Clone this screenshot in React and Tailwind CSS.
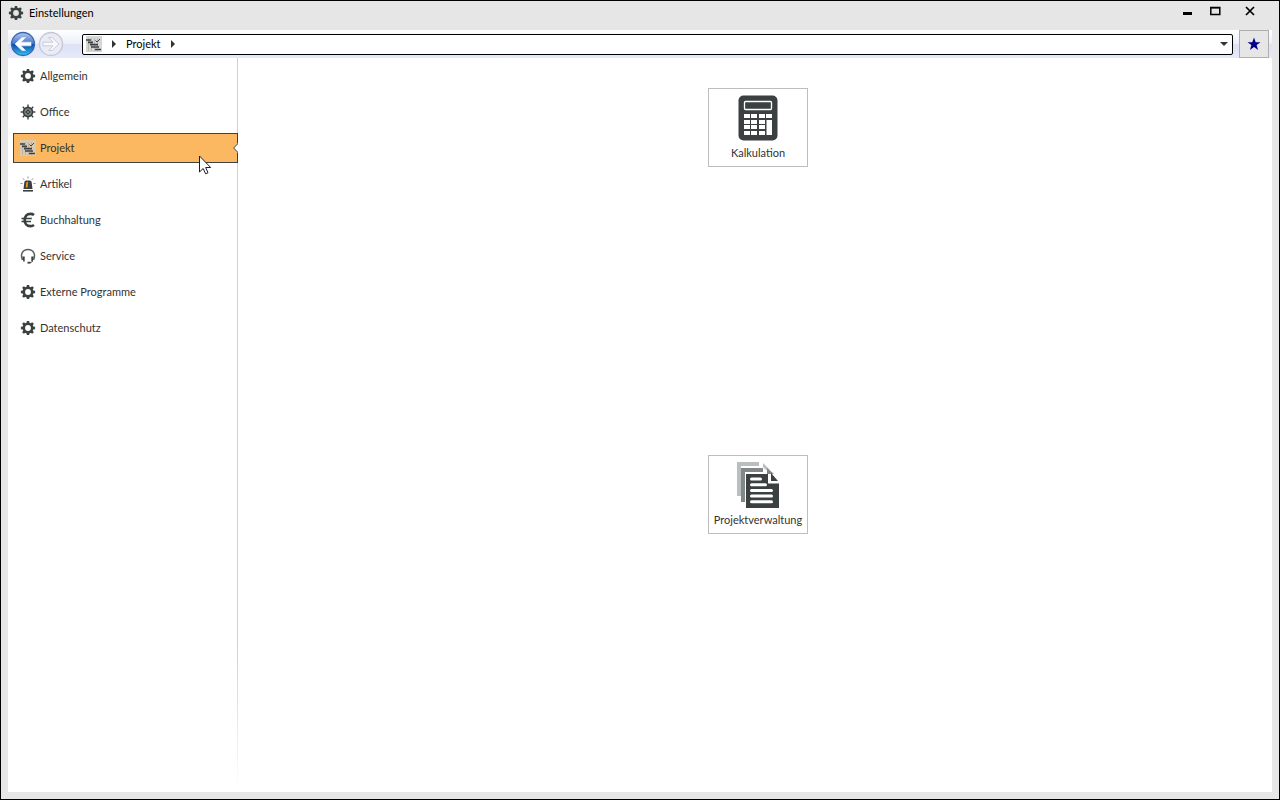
import { useState } from "react";

function GearIcon({ size = 16, hub = false }) {
  const teeth = [0, 45, 90, 135, 180, 225, 270, 315];
  return (
    <svg width={size} height={size} viewBox="0 0 16 16" fill="none" className="shrink-0">
      {teeth.map((a) => (
        <path
          key={a}
          d={hub ? "M7.300 .6h1.400v3H7.300z" : "M6.800 .9h2.400l.4 3H6.400z"}
          fill="#3b4141"
          transform={`rotate(${a} 8 8)`}
        />
      ))}
      {hub ? (
        <>
          <circle cx="8" cy="8" r="5.400" fill="#3b4141" />
          <circle cx="8" cy="8" r="3.200" stroke="#a0a5a5" strokeWidth="0.9" />
          <path d="M6 6l4 4M10 6l-4 4" stroke="#8d9292" strokeWidth="0.7" />
        </>
      ) : (
        <circle cx="8" cy="8" r="4.200" stroke="#3b4141" strokeWidth="2.600" />
      )}
    </svg>
  );
}

function ProjectIcon({ color = "#d6d6d4" }) {
  return (
    <svg width="16" height="16" viewBox="0 0 16 16" className="shrink-0">
      <path fill={color} d="M0 0h16v16H0z" />
      <path stroke="#8f8a84" strokeOpacity="0.350" d="M2.500 2v13M5.500 2v13M8.500 2v13M11.500 2v13" />
      <path
        stroke="#3b4141"
        strokeWidth="1.700"
        fill="none"
        d="M0 4h5M2 6.300h5M4 8.600h8M5 11h8M9 13.500h6"
      />
      <path stroke="#3b4141" strokeWidth="1" fill="none" d="M9.500 4.500l1.500 1.500L14 3" />
    </svg>
  );
}

function AlarmIcon() {
  return (
    <svg width="16" height="16" viewBox="0 0 16 16" fill="none" className="shrink-0">
      <path d="M3.500 13l.8-6.500A2 2 0 0 1 6.300 4.500h3.400a2 2 0 0 1 2 2l.8 6.500z" fill="#3b4141" />
      <path d="M5.800 11.500l.4-4.500q.2-1.200 1.800-1.200L7.500 11.500z" fill="#f39a2b" />
      <path d="M3 14h10v1.600H3z" fill="#3b4141" />
      <path d="M8 .5v2M3 2.500l1.300 1.500M13 2.500L11.700 4M.5 7.500h2M13.500 7.500h2" stroke="#8d9292" />
    </svg>
  );
}

function EuroIcon() {
  return (
    <svg width="16" height="16" viewBox="0 0 16 16" fill="none" className="shrink-0">
      <path
        d="M14 3A5.600 5.600 0 0 0 10.300 1.800C6.800 1.800 4.700 4.500 4.700 8s2.100 6.200 5.600 6.200a5.600 5.600 0 0 0 3.700-1.200"
        stroke="#3b4141"
        strokeWidth="2.700"
      />
      <path d="M1.500 6.500h10.300M1.500 9.500h9.500" stroke="#3b4141" strokeWidth="1.500" />
    </svg>
  );
}

function HeadsetIcon() {
  return (
    <svg width="16" height="16" viewBox="0 0 16 16" fill="none" className="shrink-0">
      <path d="M2.500 12C0 6.500 2.500 1.500 8 1.500S16 6.500 13.500 12" stroke="#5a6060" strokeWidth="1.500" />
      <path d="M2.300 8.500h2.400v5H3.300zM13.700 8.500h-2.400v5h1.400z" fill="#3b4141" />
      <path d="M13 13q-1 1.700-4 1.700" stroke="#5a6060" />
      <path d="M7.500 13.800h3v1.800h-3z" fill="#3b4141" />
    </svg>
  );
}

function CalculatorIcon() {
  return (
    <svg width="40" height="46" viewBox="0 0 40 46" fill="none">
      <rect x="0.500" y="0.500" width="39" height="45" rx="5" fill="#3b4141" />
      <rect x="6.500" y="6.500" width="27" height="8" rx="1" stroke="#fff" strokeWidth="1.300" />
      <path
        fill="#fff"
        d="M6 19h6v4H6zM13 19h6v4h-6zM21 19h6v4h-6zM28 19h6v4h-6zM6 25h6v4H6zM13 25h6v4h-6zM21 25h6v4h-6zM6 30h6v4H6zM13 30h6v4h-6zM21 30h6v4h-6zM6 36h6v4H6zM13 36h6v4h-6zM21 36h6v4h-6zM28.500 25h5.500v15h-5.500z"
      />
    </svg>
  );
}

function DocumentsIcon() {
  return (
    <svg width="42" height="46" viewBox="0 0 42 46" fill="none">
      <path d="M0 0h22v4H4v30H0z" fill="#b9bfbf" />
      <path d="M26 1l7 7h-4l-3-3z" fill="#b9bfbf" />
      <path d="M4 6h22v4H8v30H4z" fill="#828888" />
      <path d="M30 6l7 6h-7z" fill="#828888" />
      <path d="M9 12h22v9.500h11V46H9z" fill="#3b4141" />
      <path d="M34 11l7 8h-7z" fill="#3b4141" />
      <path
        d="M14.500 17h9M14.500 22.800h14M14.500 28.500h20M14.500 34h20M14.500 39.700h20"
        stroke="#fff"
        strokeWidth="3"
        strokeLinecap="round"
      />
    </svg>
  );
}

function NavArrow({ back = false }) {
  return (
    <svg width="26" height="26" viewBox="0 0 26 26">
      <defs>
        <linearGradient id="navBlue" x1="0" y1="0" x2="0" y2="1">
          <stop offset="0" stopColor="#b4c8ef" />
          <stop offset="0.480" stopColor="#4578cc" />
          <stop offset="0.520" stopColor="#0a4bab" />
          <stop offset="1" stopColor="#35c4f5" />
        </linearGradient>
      </defs>
      <circle
        cx="13"
        cy="13"
        r="11.500"
        fill={back ? "url(#navBlue)" : "#e9ebf5"}
        stroke={back ? "#3b68ac" : "#c3c7d6"}
        strokeWidth="1.300"
      />
      <path
        d="M5 13l7-6.500h3.500L11 11.200h10v3.600H11l4.500 4.700H12z"
        fill={back ? "#fff" : "#f8f9fd"}
        stroke={back ? "#e4ecf8" : "#c9ccd9"}
        strokeWidth={back ? "0.700" : "1"}
        transform={back ? undefined : "rotate(180 13 13)"}
      />
    </svg>
  );
}

function CrumbArrow() {
  return (
    <svg width="4" height="8" viewBox="0 0 4 8" className="shrink-0">
      <path d="M0 0l4 4-4 4z" fill="#333" />
    </svg>
  );
}

const sections = [
  { name: "Allgemein", icon: <GearIcon /> },
  { name: "Office", icon: <GearIcon hub /> },
  { name: "Projekt", icon: <ProjectIcon color="#d9c8b2" /> },
  { name: "Artikel", icon: <AlarmIcon /> },
  { name: "Buchhaltung", icon: <EuroIcon /> },
  { name: "Service", icon: <HeadsetIcon /> },
  { name: "Externe Programme", icon: <GearIcon /> },
  { name: "Datenschutz", icon: <GearIcon /> },
];

const tiles = [
  { name: "Kalkulation", icon: <CalculatorIcon /> },
  { name: "Projektverwaltung", icon: <DocumentsIcon /> },
];

export default function App() {
  const [active, setActive] = useState("Projekt");

  return (
    <div className="flex flex-col min-h-screen bg-[#e6e6e6] border border-black px-[7px] pb-[7px] font-[Lato,sans-serif] text-[11px] leading-4 text-[#333]">
      {/* title bar */}
      <header className="flex items-start justify-between h-[29px] pt-1 pr-2.5">
        <h1 className="flex items-center gap-[5px] text-black">
          <GearIcon />
          Einstellungen
        </h1>
        <div className="flex gap-4">
          <button type="button" aria-label="Minimieren" className="flex items-center justify-center w-3 h-3">
            <svg width="12" height="12" viewBox="0 0 12 12">
              <path d="M1 7h9v3H1z" />
            </svg>
          </button>
          <button type="button" aria-label="Maximieren" className="flex items-center justify-center w-3 h-3">
            <svg width="12" height="12" viewBox="0 0 12 12" fill="none" stroke="#000">
              <path d="M.8 2.500h9v7h-9z" strokeWidth="1.500" />
              <path d="M0 3h10" />
            </svg>
          </button>
          <button type="button" aria-label="Schließen" className="flex items-center justify-center w-6 h-3">
            <svg width="12" height="12" viewBox="0 0 12 12" stroke="#000" strokeWidth="1.700">
              <path d="M2 2l8 8M10 2l-8 8" />
            </svg>
          </button>
        </div>
      </header>

      {/* address bar */}
      <nav className="flex items-center h-7 pl-0.5 pr-[3px] bg-[linear-gradient(#fff,#eceff9_50%,#dce1f3_50%,#e6eafb)]">
        <div className="flex gap-0.5">
          <button type="button" aria-label="Zurück">
            <NavArrow back />
          </button>
          <button type="button" aria-label="Vorwärts" disabled>
            <NavArrow />
          </button>
        </div>
        <div className="flex items-center flex-1 h-[21px] ml-[18px] pl-[3px] pr-1 bg-white border border-black rounded-[2px] text-black">
          <ProjectIcon />
          <span className="flex items-center gap-2.5 ml-2.5">
            <CrumbArrow />
            <a href="#projekt">Projekt</a>
            <CrumbArrow />
          </span>
          <button type="button" aria-label="Verlauf" className="ml-auto">
            <svg width="8" height="4" viewBox="0 0 8 4">
              <path d="M0 0h8L4 4z" fill="#333" />
            </svg>
          </button>
        </div>
        <button
          type="button"
          aria-label="Favoriten"
          className="flex items-center justify-center w-[30px] h-7 ml-1.5 bg-[#e6e6e6] border border-[#adadad]"
        >
          <svg width="14" height="14" viewBox="0 0 14 14">
            <path d="M7 .5l1.700 4.700h4.800L9.600 8.100l1.500 4.900L7 10.100 2.900 13l1.500-4.900L.5 5.200h4.800z" fill="#00008b" />
          </svg>
        </button>
      </nav>

      <div className="flex flex-1 bg-white">
        {/* sections */}
        <aside className="flex w-[230px] shrink-0">
          <ul className="relative z-10 flex flex-col flex-1 gap-1.5 pt-[3px] pl-[5px] -mr-px">
            {sections.map((s) => (
              <li key={s.name} className="relative">
                <button
                  type="button"
                  onClick={() => setActive(s.name)}
                  className={`flex items-center gap-1 w-full h-[30px] pl-1.5 border ${
                    active === s.name ? "bg-[#fbb860] border-[#3b4141]" : "border-transparent"
                  }`}
                >
                  {s.icon}
                  {s.name}
                </button>
                {active === s.name && (
                  <svg width="5" height="10" viewBox="0 0 5 10" className="absolute right-0 top-2.5">
                    <path d="M5 0v10L.5 5z" fill="#fff" />
                    <path d="M5 .5L.7 5 5 9.500" fill="none" stroke="#3b4141" />
                  </svg>
                )}
                {active === s.name && (
                  <svg width="13" height="20" viewBox="0 0 13 20" className="absolute right-[26px] top-[22px]">
                    <path
                      d="M.5 1v16l3.700-3.500 2.400 5.300 2.400-1L6.700 12.500h5z"
                      fill="#fff"
                      stroke="#1c1c2b"
                    />
                  </svg>
                )}
              </li>
            ))}
          </ul>
          <div className="w-px bg-linear-to-b from-[#d0d0d0] from-80% to-white" />
        </aside>

        {/* tiles */}
        <main className="grid flex-1 grid-rows-2 justify-center pl-1.5">
          {tiles.map((t) => (
            <button
              type="button"
              key={t.name}
              className="flex flex-col items-center justify-between w-[100px] h-[79px] mt-[30px] pt-1.5 pb-[5px] bg-white border border-[#bdbdbd]"
            >
              {t.icon}
              <span className="whitespace-nowrap">{t.name}</span>
            </button>
          ))}
        </main>
      </div>
    </div>
  );
}
